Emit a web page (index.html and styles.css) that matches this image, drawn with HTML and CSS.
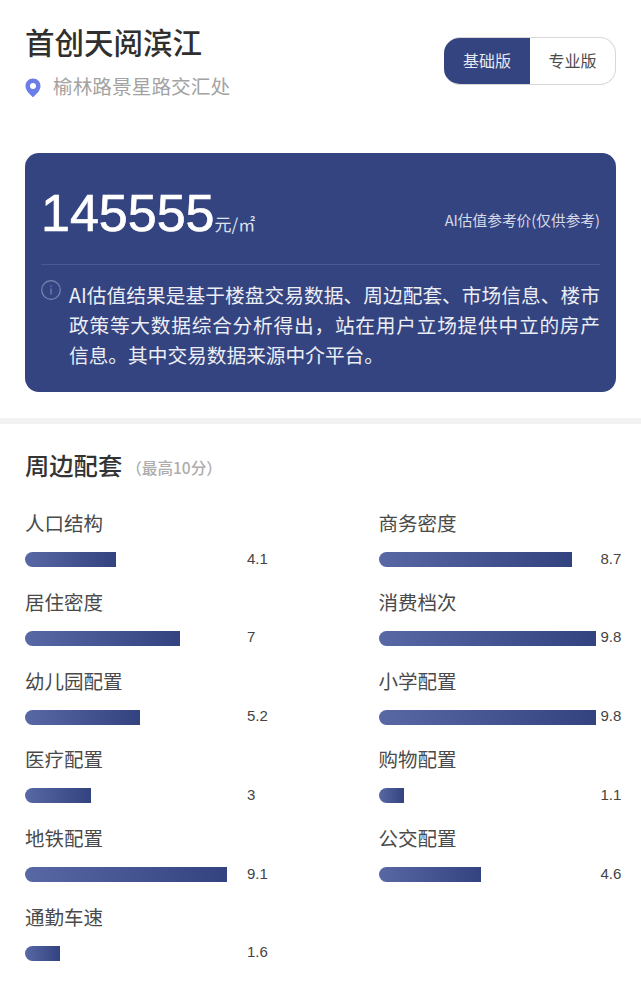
FILE: index.html
```html
<!DOCTYPE html>
<html lang="zh-CN">
<head>
<meta charset="utf-8">
<title>首创天阅滨江</title>
<link rel="stylesheet" href="styles.css">
</head>
<body>
<header class="head">
  <div class="head-info">
    <h1 class="title">首创天阅滨江</h1>
    <p class="addr">
      <svg class="pin" viewBox="0 0 16 20" aria-hidden="true"><path fill-rule="evenodd" fill="#6b7de6" d="M8 0.5C3.7 0.5 0.5 3.8 0.5 8c0 4.6 4.6 8.8 7.5 11.2 2.900-2.400 7.500-6.600 7.500-11.200C15.500 3.800 12.300.5 8 .5zM8 5.100a3 3 0 1 1 0 6 3 3 0 0 1 0-6z"/></svg>
      <span>榆林路景星路交汇处</span>
    </p>
  </div>
  <div class="toggle">
    <span class="tab tab-on">基础版</span>
    <span class="tab">专业版</span>
  </div>
</header>

<section class="card">
  <div class="price-row">
    <div class="price"><span class="num">145555</span><span class="unit">元/㎡</span></div>
    <div class="ref">AI估值参考价(仅供参考)</div>
  </div>
  <div class="note">
    <svg class="info" viewBox="0 0 20 20" aria-hidden="true"><circle cx="10" cy="10" r="9.300" fill="none" stroke="#7a86b3" stroke-width="1.200"/><path d="M10 5.500v1.200M10 8.500v6" stroke="#7a86b3" stroke-width="1.200" fill="none"/></svg>
    <p class="note-text">AI估值结果是基于楼盘交易数据、周边配套、市场信息、楼市政策等大数据综合分析得出，站在用户立场提供中立的房产信息。其中交易数据来源中介平台。</p>
  </div>
</section>

<div class="band"></div>

<section class="scores">
  <h2 class="sec-title">周边配套<small class="sec-sub">（最高10分）</small></h2>
  <div class="grid">
    <div class="item"><div class="label">人口结构</div><div class="bar-row"><div class="track"><div class="bar" style="width:91px"></div></div><span class="val">4.1</span></div></div>
    <div class="item"><div class="label">商务密度</div><div class="bar-row"><div class="track"><div class="bar" style="width:193px"></div></div><span class="val">8.7</span></div></div>
    <div class="item"><div class="label">居住密度</div><div class="bar-row"><div class="track"><div class="bar" style="width:155px"></div></div><span class="val">7</span></div></div>
    <div class="item"><div class="label">消费档次</div><div class="bar-row"><div class="track"><div class="bar" style="width:217px"></div></div><span class="val">9.8</span></div></div>
    <div class="item"><div class="label">幼儿园配置</div><div class="bar-row"><div class="track"><div class="bar" style="width:115px"></div></div><span class="val">5.2</span></div></div>
    <div class="item"><div class="label">小学配置</div><div class="bar-row"><div class="track"><div class="bar" style="width:217px"></div></div><span class="val">9.8</span></div></div>
    <div class="item"><div class="label">医疗配置</div><div class="bar-row"><div class="track"><div class="bar" style="width:66px"></div></div><span class="val">3</span></div></div>
    <div class="item"><div class="label">购物配置</div><div class="bar-row"><div class="track"><div class="bar" style="width:25px"></div></div><span class="val">1.1</span></div></div>
    <div class="item"><div class="label">地铁配置</div><div class="bar-row"><div class="track"><div class="bar" style="width:202px"></div></div><span class="val">9.1</span></div></div>
    <div class="item"><div class="label">公交配置</div><div class="bar-row"><div class="track"><div class="bar" style="width:102px"></div></div><span class="val">4.6</span></div></div>
    <div class="item"><div class="label">通勤车速</div><div class="bar-row"><div class="track"><div class="bar" style="width:35px"></div></div><span class="val">1.6</span></div></div>
  </div>
</section>
</body>
</html>
```
FILE: styles.css
```css
* { box-sizing: border-box; }
html, body { margin: 0; padding: 0; background: #fff; }
body {
  width: 641px;
  height: 990px;
  overflow: hidden;
  font-family: "Noto Sans CJK SC", "Noto Sans", sans-serif;
  color: #333;
}
.head {
  display: flex;
  justify-content: space-between;
  align-items: flex-start;
  height: 153px;
  padding: 37px 25px 0 25px;
}
.head-info { margin-top: -15px; }
.title {
  margin: 0;
  font-size: 29.500px;
  line-height: 38px;
  font-weight: 500;
  color: #2f2f2f;
}
.addr {
  display: flex;
  align-items: center;
  margin: 13px 0 0 0;
  font-size: 19.700px;
  line-height: 26px;
  color: #a3a3a3;
}
.pin { width: 16px; height: 20px; margin-right: 12px; margin-top: 4px; flex: none; }
.toggle {
  display: flex;
  width: 172px;
  height: 48px;
  border: 1px solid #d8d8d8;
  border-left: 0;
  border-radius: 16px;
  overflow: hidden;
  font-size: 16px;
}
.tab {
  flex: 1;
  display: flex;
  align-items: center;
  justify-content: center;
  color: #4a4a4a;
  padding-bottom: 2px;
}
.tab-on {
  flex: none;
  width: 86px;
  background: #334480;
  color: #e6e9f2;
}
.card {
  width: 591px;
  height: 239px;
  margin-left: 25px;
  padding: 0 16px;
  background: #344480;
  border-radius: 14px;
  color: #fff;
}
.price-row {
  display: flex;
  justify-content: space-between;
  align-items: flex-end;
  height: 112px;
  padding-bottom: 25px;
  border-bottom: 1px solid #4a5a92;
}
.price { display: flex; align-items: baseline; }
.num {
  font-family: "Liberation Sans", Arial, sans-serif;
  font-size: 52px;
  line-height: 52px;
  font-weight: 400;
  -webkit-text-stroke: 0.7px #fff;
}
.unit { font-size: 17px; line-height: 14px; color: #dfe3ef; }
.ref { font-size: 14.700px; line-height: 20px; color: #d5d9e8; padding-bottom: 9px; }
.note { display: flex; margin-top: 15px; }
.info { width: 20px; height: 20px; flex: none; margin-right: 8px; }
.note-text {
  margin: 0;
  width: 531px;
  font-size: 19.700px;
  line-height: 30px;
  color: #eceef5;
  text-align: justify;
}
.band { height: 6px; margin-top: 26px; background: #f2f2f2; }
.scores { padding: 0 25px; }
.sec-title {
  margin: 23px 0 0 0;
  font-size: 24.300px;
  line-height: 36px;
  font-weight: 500;
  color: #333;
}
.sec-sub { font-size: 15.600px; font-weight: 500; color: #adadad; margin-left: 4px; vertical-align: 1px; }
.grid {
  display: grid;
  grid-template-columns: 353.500px 1fr;
  grid-auto-rows: 78.800px;
  margin-top: 24px;
}
.label { font-size: 19.500px; line-height: 28px; color: #4a4a4a; }
.bar-row { display: flex; align-items: center; margin-top: 15px; height: 15px; }
.track { width: 222px; flex: none; }
.bar {
  height: 15px;
  border-radius: 7.500px 0 0 7.500px;
  background: linear-gradient(90deg, #5868a4, #33437f);
}
.val {
  font-family: "Liberation Sans", Arial, sans-serif;
  font-size: 15px;
  color: #444;
  margin-top: -3px;
}
```
